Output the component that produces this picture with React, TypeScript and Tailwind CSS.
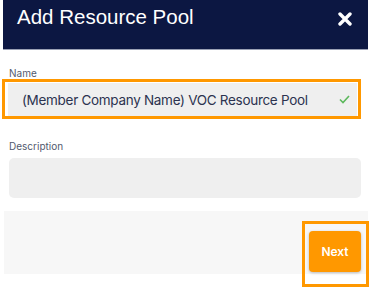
const App = () => {
  return (
    <div className="relative w-[375px] h-[293px] bg-white overflow-hidden font-['Inter',sans-serif]">
      <div className="ml-[3px] w-[365px] h-[50px] bg-[#0c1742] border-b border-[#9aa0b4] flex items-start justify-between pl-[14px] pr-[16px] pt-[5px]">
        <h2 className="font-['Liberation_Sans',Arial,sans-serif] text-[20.5px] leading-[24px] text-white">
          Add Resource Pool
        </h2>
        <svg className="mt-[7px]" width="14" height="14" viewBox="0 0 14 14" fill="none">
          <path d="M2 2L12 12M12 2L2 12" stroke="white" strokeWidth="3.4" strokeLinecap="round" />
        </svg>
      </div>

      <div className="mt-[17px] ml-[9px] h-[12px] text-[10px] leading-[12px] text-[#525a6e]">Name</div>
      <div className="ml-[2px] w-[359px] h-[40px] border-[3px] border-[#ff9800] pl-[3px] pt-[1px] pr-[1px]">
        <div className="h-full bg-[#efefef] flex items-center justify-between pl-[14px] pr-[7px]">
          <span className="text-[13.5px] leading-[18px] tracking-[-0.3px] text-[#2c3350]">
            (Member Company Name) VOC Resource Pool
          </span>
          <svg width="11" height="9" viewBox="0 0 11 9" fill="none">
            <path d="M1 4.5L4 7.5L10 1" stroke="#5cb85c" strokeWidth="1.6" />
          </svg>
        </div>
      </div>

      <div className="mt-[21px] ml-[9px] h-[12px] text-[10px] leading-[12px] text-[#525a6e]">Description</div>
      <div className="mt-[6px] ml-[9px] w-[352px] h-[40px] rounded-[5px] bg-[#efefef]" />

      <div className="mt-[13px] ml-[4px] w-[364px] h-[63px] bg-[#f7f7f7] flex justify-end pt-[20px] pr-[7px]">
        <button className="w-[52px] h-[41px] rounded-[4px] bg-[#ff9800] text-white text-[12px] font-semibold shadow-[0_1px_3px_rgba(0,0,0,0.25)]">
          Next
        </button>
      </div>

      <div className="absolute left-[302px] top-[221px] w-[67px] h-[66px] border-[3px] border-[#ff9800] pointer-events-none" />
    </div>
  );
};

export default App;
